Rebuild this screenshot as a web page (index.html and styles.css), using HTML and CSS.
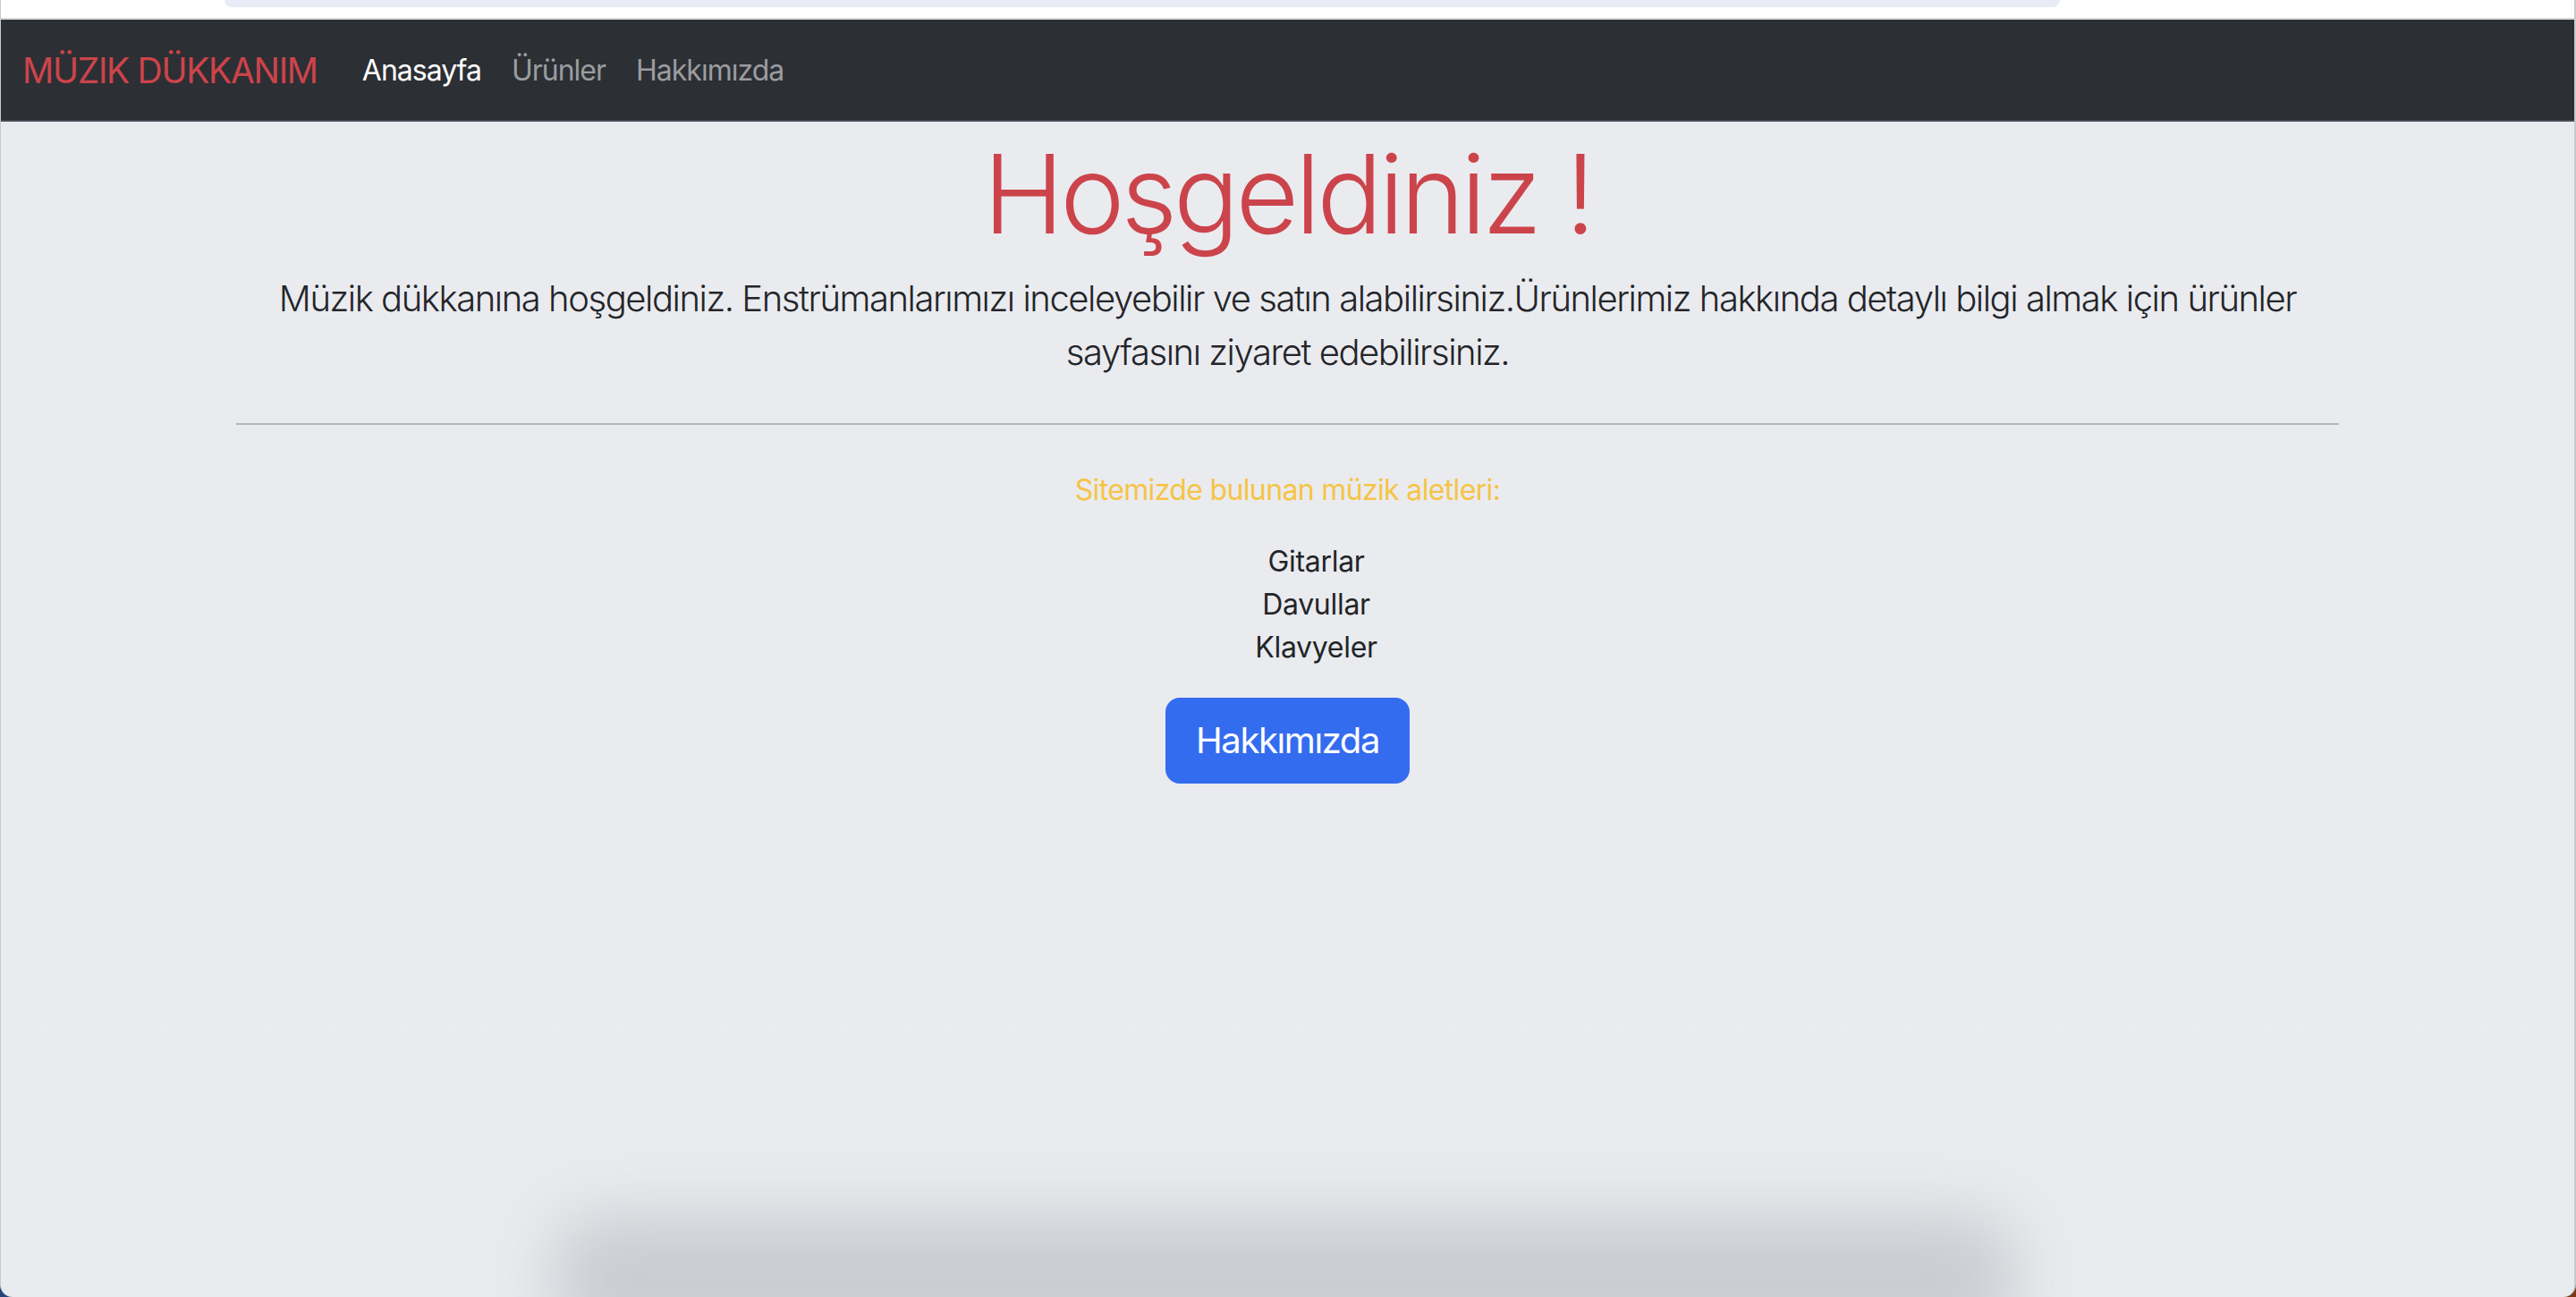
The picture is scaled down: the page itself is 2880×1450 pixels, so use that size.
FILE: index.html
```html
<!DOCTYPE html>
<html lang="tr">
<head>
<meta charset="utf-8">
<title>Müzik Dükkanım</title>
<link rel="stylesheet" href="styles.css">
</head>
<body>
<div class="window">
  <div class="chrome">
    <div class="chrome-pill"></div>
  </div>
  <nav class="navbar">
    <a class="brand" href="#">MÜZIK DÜKKANIM</a>
    <ul class="nav">
      <li><a class="nav-link active" href="#">Anasayfa</a></li>
      <li><a class="nav-link" href="#">Ürünler</a></li>
      <li><a class="nav-link" href="#">Hakkımızda</a></li>
    </ul>
  </nav>
  <main class="container">
    <h1 class="title">Hoşgeldiniz !</h1>
    <p class="lead">Müzik dükkanına hoşgeldiniz. Enstrümanlarımızı inceleyebilir ve satın alabilirsiniz.Ürünlerimiz hakkında detaylı bilgi almak için ürünler sayfasını ziyaret edebilirsiniz.</p>
    <hr class="divider">
    <p class="subtitle">Sitemizde bulunan müzik aletleri:</p>
    <ul class="instruments">
      <li>Gitarlar</li>
      <li>Davullar</li>
      <li>Klavyeler</li>
    </ul>
    <a class="btn" href="#">Hakkımızda</a>
  </main>
  <div class="dock-shadow"></div>
</div>
</body>
</html>
```

FILE: styles.css
```css
html {
  background: linear-gradient(90deg, #23457a 0%, #23457a 50%, #7a3814 50%, #7a3814 100%);
}
body {
  margin: 0;
  font-family: "Inter", "Roboto", "Liberation Sans", sans-serif;
  color: #232529;
}
.window {
  position: relative;
  height: 1450px;
  box-sizing: border-box;
  background: linear-gradient(180deg, #eaebef 0%, #eaebef 78%, #e8ecef 82%, #e8ecef 100%);
  border-left: 1px solid #c9cacd;
  border-right: 2px solid #c9cacd;
  border-radius: 0 0 14px 14px;
  overflow: hidden;
}
.chrome {
  height: 20px;
  background: #ffffff;
  border-bottom: 2px solid #d8d8d8;
  padding-left: 250px;
}
.chrome-pill {
  width: 2052px;
  height: 8px;
  background: #e9ecf6;
  border-radius: 0 0 22px 22px;
}
.navbar {
  height: 112px;
  background: #2c2f34;
  border-bottom: 2px solid #454a52;
  display: flex;
  align-items: center;
  padding-left: 24px;
}
.brand {
  font-size: 39px;
  color: #cc444b;
  text-decoration: none;
  margin-right: 50px;
  letter-spacing: -1.3px;
}
.nav {
  display: flex;
  list-style: none;
  margin: 0;
  padding: 0;
  gap: 34px;
}
.nav-link {
  font-size: 32px;
  color: #9b9c9f;
  text-decoration: none;
  letter-spacing: -1px;
}
.nav-link.active {
  color: #ffffff;
}
.container {
  width: 2351px;
  margin: 0 auto;
  text-align: center;
}
.title {
  margin: 8px 0 14px;
  font-size: 122px;
  font-weight: 300;
  line-height: 1.2;
  color: #cc444b;
  letter-spacing: -4.2px;
}
.lead {
  margin: 0;
  font-size: 40px;
  font-weight: 300;
  line-height: 60px;
  letter-spacing: -1.45px;
}
.divider {
  margin: 49px 0 0;
  border: 0;
  height: 2px;
  background: #b6b7bb;
}
.subtitle {
  margin: 49px 0 32px;
  font-size: 32px;
  line-height: 48px;
  color: #f5c445;
  letter-spacing: -0.65px;
}
.instruments {
  list-style: none;
  margin: 0 0 32px;
  padding-left: 64px;
  font-size: 32px;
  line-height: 48px;
  letter-spacing: -0.3px;
}
.btn {
  display: inline-block;
  box-sizing: border-box;
  height: 96px;
  padding: 16px 32px;
  font-size: 40px;
  line-height: 60px;
  color: #ffffff;
  background: #346cf0;
  border: 2px solid #346cf0;
  border-radius: 16px;
  text-decoration: none;
  letter-spacing: -1.4px;
}
.dock-shadow {
  position: absolute;
  left: 620px;
  width: 1630px;
  bottom: -50px;
  height: 140px;
  background: #c9ccd0;
  border-radius: 40px;
  filter: blur(36px);
}
```
